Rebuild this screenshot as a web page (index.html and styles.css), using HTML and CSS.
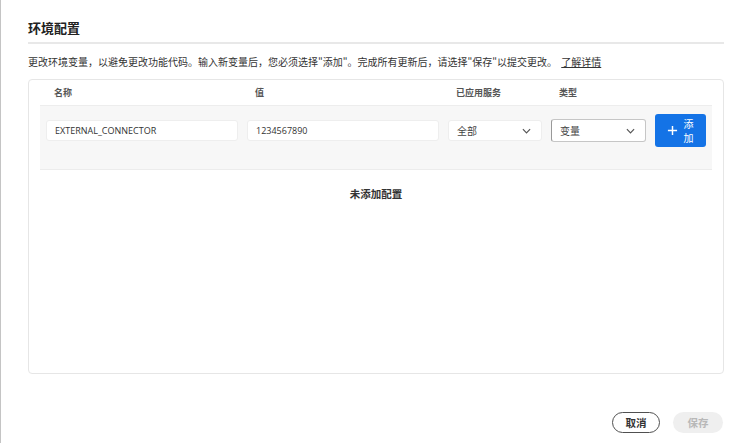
FILE: index.html
```html
<!DOCTYPE html>
<html lang="zh-CN">
<head>
<meta charset="utf-8">
<title>环境配置</title>
<link rel="stylesheet" href="styles.css">
</head>
<body>
<div class="page">
  <h1 class="title">环境配置</h1>
  <p class="desc">更改环境变量，以避免更改功能代码。输入新变量后，您必须选择"添加"。完成所有更新后，请选择"保存"以提交更改。 <a class="link" href="#">了解详情</a></p>
  <div class="card">
    <div class="head">
      <div class="col c-name">名称</div>
      <div class="col c-val">值</div>
      <div class="col c-svc">已应用服务</div>
      <div class="col c-type">类型</div>
    </div>
    <div class="row">
      <div class="field c-name">EXTERNAL_CONNECTOR</div>
      <div class="field c-val">1234567890</div>
      <div class="field select c-svc"><span>全部</span>
        <svg class="chev" viewBox="0 0 10 6" width="9" height="6"><path d="M1 1l4 4 4-4" fill="none" stroke="#555" stroke-width="1.3"/></svg>
      </div>
      <div class="field select focus c-type"><span>变量</span>
        <svg class="chev" viewBox="0 0 10 6" width="9" height="6"><path d="M1 1l4 4 4-4" fill="none" stroke="#555" stroke-width="1.3"/></svg>
      </div>
      <button class="add">
        <svg viewBox="0 0 12 12" width="11" height="11"><path d="M6 1v10M1 6h10" stroke="#fff" stroke-width="1.6"/></svg>
        <span class="add-label">添加</span>
      </button>
    </div>
    <div class="empty">未添加配置</div>
  </div>
  <div class="footer">
    <button class="btn cancel">取消</button>
    <button class="btn save" disabled>保存</button>
  </div>
</div>
</body>
</html>
```

FILE: styles.css
```css
* { box-sizing: border-box; }
html, body { margin: 0; padding: 0; background: #fff; }
body {
  font-family: "Noto Sans CJK SC", "Noto Sans", sans-serif;
  color: #2c2c2c;
}
.page {
  width: 750px;
  height: 443px;
  border-left: 1px solid #c4c4c4;
  padding: 18px 26px 0 27px;
  display: flex;
  flex-direction: column;
}
.title {
  margin: 0;
  font-size: 13px;
  font-weight: 700;
  line-height: 20px;
  padding-bottom: 4px;
  border-bottom: 2px solid #e8e8e8;
  color: #222;
}
.desc {
  margin: 0;
  padding-top: 10px;
  font-size: 10px;
  line-height: 16px;
  color: #333;
  white-space: nowrap;
}
.link { color: #333; text-decoration: underline; margin-left: 2px; }
.card {
  margin-top: 9px;
  height: 295px;
  border: 1px solid #e6e6e6;
  border-radius: 4px;
  padding: 0 11px;
  display: flex;
  flex-direction: column;
}
.head {
  height: 26px;
  display: flex;
  align-items: center;
  gap: 9px;
  padding: 0 6px;
  border-bottom: 1px solid #ededed;
  font-size: 9px;
  font-weight: 700;
  color: #555;
}
.col { padding-left: 8px; }
.c-name { width: 192px; }
.c-val { width: 192px; }
.c-svc { width: 94px; }
.c-type { width: 95px; }
.row {
  height: 64px;
  background: #f7f7f7;
  display: flex;
  align-items: center;
  align-self: stretch;
  gap: 9px;
  padding: 0 6px 14px;
  border-bottom: 1px solid #ececec;
}
.field {
  height: 21px;
  background: #fff;
  border: 1px solid #eeeeee;
  border-radius: 3px;
  padding-left: 8px;
  display: flex;
  align-items: center;
  font-family: "Open Sans", "Noto Sans CJK SC", sans-serif;
  font-size: 9px;
  color: #333;
}
.select {
  justify-content: space-between;
  padding-right: 10px;
  font-family: "Noto Sans CJK SC", sans-serif;
  font-size: 10px;
  color: #444;
}
.focus {
  height: 23px;
  border: 1px solid #c6c6c6;
  border-left-color: #999;
}
.chev { display: block; }
.add {
  width: 51px;
  height: 33px;
  margin-left: 0;
  background: #1473e6;
  border: none;
  border-radius: 3px;
  color: #fff;
  display: flex;
  align-items: center;
  justify-content: center;
  gap: 5px;
  padding: 0 6px;
  font-family: "Noto Sans CJK SC", sans-serif;
}
.add svg { display: block; }
.add-label {
  width: 11px;
  font-size: 10px;
  line-height: 14px;
  word-break: break-all;
  text-align: center;
}
.empty {
  text-align: center;
  font-size: 10.5px;
  font-weight: 700;
  color: #333;
  padding-top: 16px;
}
.footer {
  display: flex;
  justify-content: flex-end;
  gap: 13px;
  margin-top: 38px;
  padding-right: 1px;
}
.btn {
  height: 21px;
  width: 50px;
  border-radius: 11px;
  font-family: "Noto Sans CJK SC", sans-serif;
  font-size: 10.5px;
  font-weight: 700;
  padding: 0;
  display: flex;
  align-items: center;
  justify-content: center;
}
.cancel {
  background: #fff;
  border: 1.5px solid #505050;
  color: #333;
  width: 48px;
}
.save {
  background: #efefef;
  border: none;
  color: #b8b8b8;
}
```
